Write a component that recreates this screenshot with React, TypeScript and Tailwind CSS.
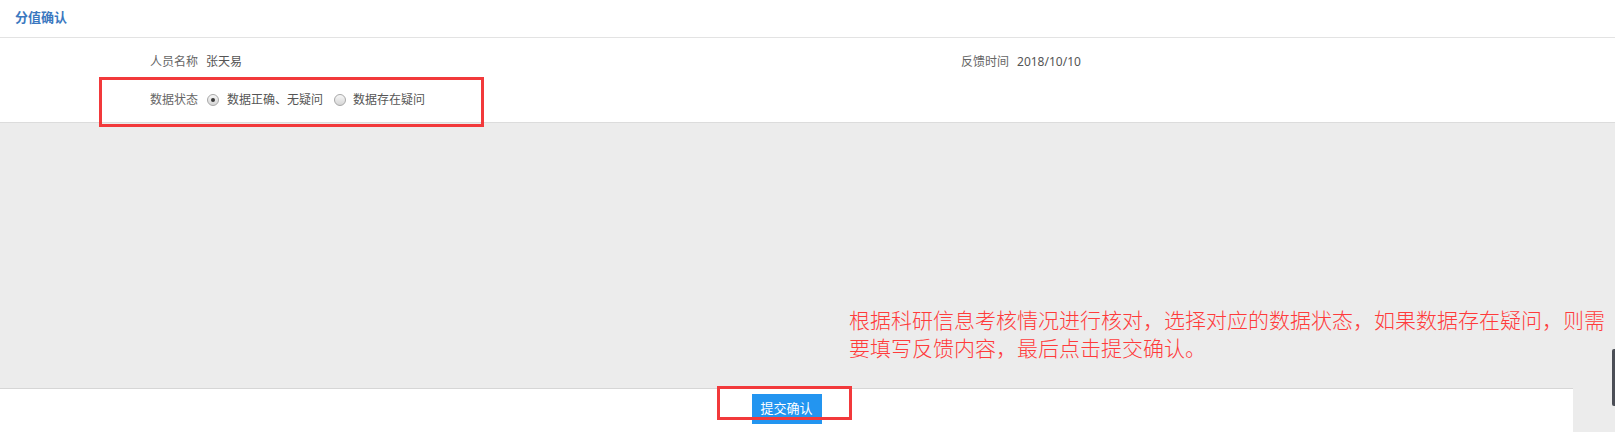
import React from "react";

const FONT = '"Noto Sans", "Noto Sans CJK SC", sans-serif';

function Radio({ checked }: { checked?: boolean }) {
  return (
    <span className="relative inline-flex h-[12px] w-[12px] items-center justify-center rounded-full border border-[#a8a8a8] bg-gradient-to-b from-[#f7f7f7] to-[#d6d6d6]">
      {checked && <span className="h-[4px] w-[4px] rounded-full bg-[#3a3a3a]" />}
    </span>
  );
}

export default function App() {
  return (
    <div
      className="relative flex h-[432px] w-full flex-col overflow-hidden bg-[#ececec]"
      style={{ fontFamily: FONT }}
    >
      {/* header */}
      <div className="h-[38px] shrink-0 border-b border-[#e3e3e3] bg-white">
        <div className="pl-[15px] pt-[7px] text-[13px] font-bold leading-[20px] text-[#3b78c0]">
          分值确认
        </div>
      </div>

      {/* info */}
      <div className="h-[85px] shrink-0 border-b border-[#dcdcdc] bg-white pl-[150px] text-[12px] text-[#666]">
        <div className="flex h-[20px] items-center pt-[0px] mt-[14px]">
          <div className="flex w-[811px] items-center gap-[8px]">
            <span>人员名称</span>
            <span className="text-[#555]">张天易</span>
          </div>
          <div className="flex items-center gap-[8px]">
            <span>反馈时间</span>
            <span className="text-[#555]">2018/10/10</span>
          </div>
        </div>
        <div className="mt-[18px] flex h-[20px] items-center">
          <span className="mr-[9px]">数据状态</span>
          <Radio checked />
          <span className="ml-[8px] mr-[11px] text-[#555]">数据正确、无疑问</span>
          <Radio />
          <span className="ml-[7px] text-[#555]">数据存在疑问</span>
        </div>
      </div>

      {/* gray content */}
      <div className="flex-1" />

      {/* footer */}
      <div className="h-[44px] w-[1573px] shrink-0 border-t border-[#d6d6d6] bg-white pt-[5px]">
        <div className="flex justify-center">
          <button className="h-[30px] w-[70px] bg-[#2395f0] text-[13px] text-white">
            提交确认
          </button>
        </div>
      </div>

      {/* annotation boxes */}
      <div className="pointer-events-none absolute left-[99px] top-[77px] h-[50px] w-[385px] border-[3px] border-[#f2393b]" />
      <div className="pointer-events-none absolute left-[717px] top-[386px] h-[34px] w-[135px] border-[3px] border-[#f2393b]" />

      {/* annotation text */}
      <div className="absolute left-[849px] top-[306px] whitespace-nowrap text-[21px] font-light leading-[28px] text-[#ff3b3b]">
        根据科研信息考核情况进行核对，选择对应的数据状态，如果数据存在疑问，则需
        <br />
        要填写反馈内容，最后点击提交确认。
      </div>

      {/* scrollbar thumb */}
      <div className="absolute right-0 top-[349px] h-[57px] w-[3px] rounded-l-[2px] bg-[#4b4e56]" />
    </div>
  );
}
